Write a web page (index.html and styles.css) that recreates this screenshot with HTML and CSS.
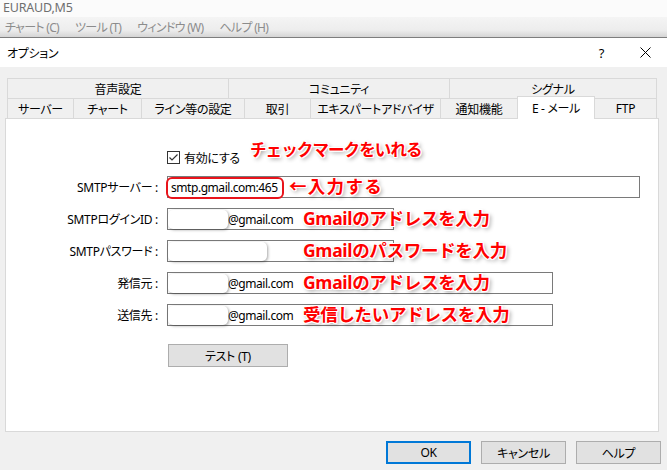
FILE: index.html
```html
<!DOCTYPE html>
<html lang="ja">
<head>
    <meta charset="UTF-8">
    <meta name="viewport" content="width=device-width, initial-scale=1.0">
    <link rel="stylesheet" href="styles.css">
    <title>オプション</title>
</head>
<body>
    <div class="app-title">EURAUD,M5</div>
    <div class="menubar">
      <span>チャート (C)</span>
      <span>ツール (T)</span>
      <span>ウィンドウ (W)</span>
      <span>ヘルプ (H)</span>
    </div>

    <div class="dialog-title">
      <span>オプション</span>
      <div class="title-actions">
        <span class="help-mark">?</span>
        <svg class="close-icon" width="11" height="11" viewBox="0 0 11 11">
          <path d="M0.5 0.5 L10.5 10.5 M10.5 0.5 L0.5 10.5" stroke="#000" stroke-width="1" fill="none"/>
        </svg>
      </div>
    </div>

    <div class="dialog-body">
      <div class="tabs">
        <div class="tab-row">
          <div class="tab tab-sound">音声設定</div>
          <div class="tab tab-community">コミュニティ</div>
          <div class="tab tab-signal last">シグナル</div>
        </div>
        <div class="tab-row">
          <div class="tab tab-server">サーバー</div>
          <div class="tab tab-chart">チャート</div>
          <div class="tab tab-line">ライン等の設定</div>
          <div class="tab tab-trade">取引</div>
          <div class="tab tab-expert">エキスパートアドバイザ</div>
          <div class="tab tab-notify">通知機能</div>
          <div class="tab tab-mail selected">E - メール</div>
          <div class="tab tab-ftp last">FTP</div>
        </div>
      </div>

      <div class="panel">
        <div class="check-row">
          <svg class="checkbox" width="13" height="13" viewBox="0 0 13 13">
            <rect x="0.5" y="0.5" width="12" height="12" fill="#fff" stroke="#333"/>
            <path d="M2.5 6.5 L5 9 L10.5 3.5" stroke="#333" stroke-width="1.2" fill="none"/>
          </svg>
          <span>有効にする</span>
          <span class="note note-check">チェックマークをいれる</span>
        </div>

        <div class="form-row">
          <label class="form-label">SMTPサーバー :</label>
          <div class="field field-wide">
            smtp.gmail.com:465
            <span class="red-box"></span>
          </div>
          <span class="note note-arrow">←入力する</span>
        </div>

        <div class="form-row">
          <label class="form-label">SMTPログインID :</label>
          <div class="field field-short masked">
            @gmail.com
            <span class="mask"></span>
          </div>
          <span class="note">Gmailのアドレスを入力</span>
        </div>

        <div class="form-row">
          <label class="form-label">SMTPパスワード :</label>
          <div class="field field-short">
            <span class="mask mask-long"></span>
          </div>
          <span class="note">Gmailのパスワードを入力</span>
        </div>

        <div class="form-row">
          <label class="form-label">発信元 :</label>
          <div class="field field-mid masked">
            @gmail.com
            <span class="mask"></span>
          </div>
          <span class="note">Gmailのアドレスを入力</span>
        </div>

        <div class="form-row">
          <label class="form-label">送信先 :</label>
          <div class="field field-mid masked">
            @gmail.com
            <span class="mask"></span>
          </div>
          <span class="note">受信したいアドレスを入力</span>
        </div>

        <button class="btn test-btn">テスト (T)</button>
      </div>

      <div class="buttons">
        <button class="btn btn-ok">OK</button>
        <button class="btn">キャンセル</button>
        <button class="btn">ヘルプ</button>
      </div>
    </div>
</body>
</html>
```

FILE: styles.css
```css
* {
    box-sizing: border-box;
  }

  body {
    margin: 0;
    width: 667px;
    height: 470px;
    overflow: hidden;
    background: #f0f0f0;
    font-family: "Noto Sans", "Noto Sans CJK JP", sans-serif;
    font-size: 12px;
    letter-spacing: -0.3px;
    color: #000;
    font-feature-settings: "palt" 1;
  }

  .app-title {
    height: 17px;
    padding-left: 3px;
    background: #fbfbfb;
    color: #6f6f6f;
    font-size: 12.5px;
    line-height: 15px;
    letter-spacing: -0.2px;
  }

  .menubar {
    height: 21px;
    display: flex;
    align-items: center;
    gap: 16px;
    padding-left: 5px;
    background: linear-gradient(#f4f4f4, #ededed 65%, #d5d5d5);
    border-bottom: 1px solid #7d7d7d;
    color: #8c8c8c;
    letter-spacing: -0.7px;
  }

  .dialog-title {
    height: 29px;
    display: flex;
    align-items: center;
    justify-content: space-between;
    padding: 0 16px 0 7px;
    background: #fff;
  }

  .title-actions {
    display: flex;
    align-items: center;
  }

  .help-mark {
    margin-right: 36px;
    font-size: 13px;
  }

  .dialog-body {
    padding: 11px 8px 0 5px;
  }

  /* tabs */
  .tabs {
    margin: 0 3px 0 2px;
  }

  .tab-row {
    display: flex;
    height: 20px;
  }

  .tab {
    height: 20px;
    border-top: 1px solid #d9d9d9;
    border-left: 1px solid #d9d9d9;
    display: flex;
    align-items: center;
    justify-content: center;
    flex: none;
  }

  .tab.last {
    border-right: 1px solid #d9d9d9;
  }

  .tab-sound, .tab-community { width: 221px; }
  .tab-signal { width: 208px; }
  .tab-server { width: 66px; }
  .tab-chart { width: 68px; }
  .tab-line { width: 103px; }
  .tab-trade { width: 66px; }
  .tab-expert { width: 130px; }
  .tab-notify { width: 77px; }
  .tab-mail { width: 78px; }
  .tab-ftp { width: 62px; }

  .tab.selected {
    height: 23px;
    margin-top: -2px;
    margin-bottom: -1px;
    padding-bottom: 1px;
    background: #fff;
    border-right: 1px solid #d9d9d9;
    z-index: 1;
  }

  .tab.selected + .tab {
    border-left: none;
  }

  /* panel */
  .panel {
    height: 314px;
    border: 1px solid #d9d9d9;
    background: #fff;
    padding-top: 31px;
  }

  .check-row {
    position: relative;
    height: 15px;
    display: flex;
    align-items: center;
    gap: 4px;
    padding-left: 161px;
    margin-bottom: 11px;
  }

  .form-row {
    position: relative;
    height: 22px;
    display: flex;
    align-items: center;
    margin-bottom: 10px;
  }

  .form-label {
    width: 152px;
    text-align: right;
    margin-right: 9px;
  }

  .field {
    position: relative;
    height: 22px;
    border: 1px solid #7a7a7a;
    background: #fff;
    display: flex;
    align-items: center;
    padding-left: 3px;
    letter-spacing: -0.45px;
  }

  .field-wide { width: 473px; }
  .field-short { width: 227px; }
  .field-mid { width: 386px; }

  .field.masked {
    padding-left: 60px;
  }

  .mask {
    position: absolute;
    left: 0;
    top: 1px;
    width: 60px;
    height: 19px;
    background: #fff;
    border-radius: 5px;
    box-shadow: 1px 1px 3px rgba(0, 0, 0, 0.35);
  }

  .mask-long {
    width: 99px;
  }

  .red-box {
    position: absolute;
    left: -2px;
    top: 0;
    width: 118px;
    height: 22px;
    border: 2px solid #e8141b;
    border-radius: 6px;
  }

  /* red annotations */
  .note {
    position: absolute;
    left: 297px;
    top: 50%;
    transform: translateY(-54%);
    font-family: "Noto Sans", "Noto Sans CJK JP", sans-serif;
    font-feature-settings: normal;
    font-size: 17.5px;
    font-weight: 700;
    line-height: 1;
    letter-spacing: -0.3px;
    white-space: nowrap;
    color: #ff0000;
    text-shadow:
      1px 0 #fff, -1px 0 #fff, 0 1px #fff, 0 -1px #fff,
      1px 1px #fff, -1px -1px #fff, 1px -1px #fff, -1px 1px #fff,
      2px 2px 4px rgba(0, 0, 0, 0.45);
  }

  .note-check {
    left: 244px;
    transform: translateY(-100%);
    font-size: 16.5px;
    letter-spacing: -0.9px;
  }

  .note-arrow {
    left: 283px;
    letter-spacing: 1.3px;
  }

  /* buttons */
  .btn {
    height: 23px;
    border: 1px solid #adadad;
    background: #e1e1e1;
    font-family: "Noto Sans", "Noto Sans CJK JP", sans-serif;
    font-size: 12px;
    letter-spacing: -0.3px;
    font-feature-settings: "palt" 1;
    color: #000;
    padding: 0;
  }

  .test-btn {
    width: 120px;
    margin: 8px 0 0 162px;
  }

  .buttons {
    display: flex;
    justify-content: flex-end;
    gap: 10px;
    margin: 9px -2px 0 0;
  }

  .buttons .btn {
    width: 85px;
  }

  .btn-ok {
    border: 2px solid #0078d7;
  }
```
